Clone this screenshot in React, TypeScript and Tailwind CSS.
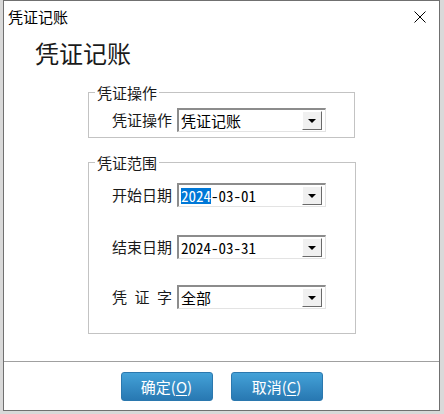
import type { ReactNode } from "react";

const cjk = "font-['Noto_Sans_CJK_SC','Noto_Sans',sans-serif]";
const mono = "font-['Noto_Sans_Mono_CJK_SC','Liberation_Mono',monospace]";

function Combo({ children, isMono }: { children: ReactNode; isMono?: boolean }) {
	return (
		<div className="flex h-[24px] w-[149px] border-t-2 border-l-2 border-r border-b border-t-[#8c8c8c] border-l-[#8c8c8c] border-r-[#e3e3e3] border-b-[#e3e3e3] bg-white">
			<div
				className={`flex flex-1 items-center pl-[2px] text-[15px] leading-[16px] text-black ${isMono ? mono : cjk}`}>
				{children}
			</div>
			<div className="my-[1px] mr-[3px] flex w-[20px] items-center justify-center border border-t-white border-l-white border-r-[#6a6a6a] border-b-[#6a6a6a] bg-[#f0f0f0]">
				<div className="h-0 w-0 border-t-[4px] border-l-[4px] border-r-[4px] border-t-black border-l-transparent border-r-transparent" />
			</div>
		</div>
	);
}

function Row({ label, children }: { label: ReactNode; children: ReactNode }) {
	return (
		<div className="flex items-center gap-[5px]">
			<div className="w-[60px] text-[15px] leading-[16px] text-[#1a1a1a]">{label}</div>
			{children}
		</div>
	);
}

function Btn({ text, hot }: { text: string; hot: string }) {
	return (
		<button className="flex h-[29px] w-[92px] items-center justify-center rounded-[3px] border border-[#2b78ae] bg-linear-to-b from-[#44a2d8] to-[#2878b2] text-[15px] leading-[16px] text-white">
			{text}(<span className="underline underline-offset-2">{hot}</span>)
		</button>
	);
}

export default function App() {
	return (
		<div className={`h-[414px] w-[444px] bg-[#d9d9d9] pl-[3px] ${cjk}`}>
			<div className="flex h-[411px] w-[437px] flex-col border border-[#707070] bg-white">
				<div className="flex h-[31px] items-center justify-between pl-[4px] pr-[13px]">
					<span className="text-[15px] leading-[16px] text-black">凭证记账</span>
					<svg width="12" height="12" viewBox="0 0 12 12" className="text-black">
						<path d="M0.5 0.5 L11.5 11.5 M11.5 0.5 L0.5 11.5" stroke="currentColor" strokeWidth="1" fill="none" />
					</svg>
				</div>

				<div className="flex flex-1 flex-col">
					<h1 className="ml-[31px] mt-[9px] text-[24px] leading-[24px] text-[#1a1a1a]">凭证记账</h1>

					<fieldset className="ml-[84px] mt-[20px] w-[267px] border border-[#c3c3c3] pb-[5px] pt-[8px]">
						<legend className="ml-[6px] px-[2px] text-[15px] leading-[15px] text-[#1a1a1a]">凭证操作</legend>
						<div className="pl-[23px]">
							<Row label="凭证操作">
								<Combo>凭证记账</Combo>
							</Row>
						</div>
					</fieldset>

					<fieldset className="ml-[84px] mt-[17px] w-[268px] border border-[#c3c3c3] pb-[24px] pt-[13px]">
						<legend className="ml-[6px] px-[2px] text-[15px] leading-[15px] text-[#1a1a1a]">凭证范围</legend>
						<div className="flex flex-col pl-[23px]">
							<Row label="开始日期">
								<Combo isMono>
									<span className="bg-[#0078d7] text-white">2024</span>-03-01
								</Combo>
							</Row>
							<div className="mt-[28px]">
								<Row label="结束日期">
									<Combo isMono>2024-03-31</Combo>
								</Row>
							</div>
							<div className="mt-[26px]">
								<Row
									label={
										<div className="flex justify-between">
											<span>凭</span>
											<span>证</span>
											<span>字</span>
										</div>
									}>
									<Combo>全部</Combo>
								</Row>
							</div>
						</div>
					</fieldset>
				</div>

				<div className="flex h-[49px] justify-center gap-[18px] border-t border-[#a0a0a0] pt-[10px]">
					<Btn text="确定" hot="O" />
					<Btn text="取消" hot="C" />
				</div>
			</div>
		</div>
	);
}
